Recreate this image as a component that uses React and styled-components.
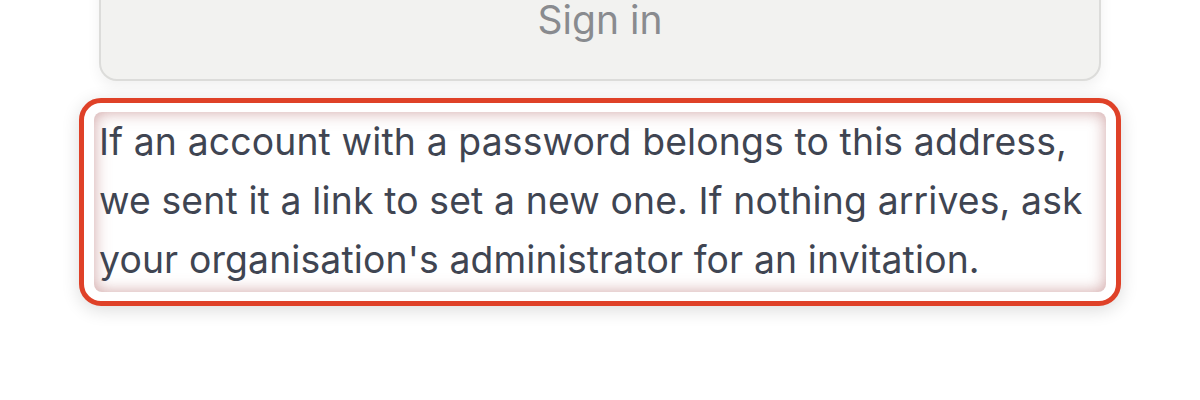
import styled, { createGlobalStyle } from "styled-components";

const GlobalStyle = createGlobalStyle`
  html, body {
    margin: 0;
    padding: 0;
    background: #ffffff;
  }
  body {
    font-family: Inter, "Noto Sans", sans-serif;
  }
`;

const Page = styled.div`
  width: 1200px;
  height: 400px;
  overflow: hidden;
  display: flex;
  flex-direction: column;
  align-items: center;
`;

const SignInButton = styled.button`
  width: 1002px;
  height: 122px;
  margin-top: -41px;
  padding-top: 0;
  background: #f2f2f0;
  border: 2px solid #dcdcda;
  border-radius: 18px;
  box-shadow: 0 6px 14px rgba(0, 0, 0, 0.06);
  color: #898b8f;
  font-family: Inter, "Noto Sans", sans-serif;
  font-size: 39px;
  cursor: pointer;
`;

const Highlight = styled.div`
  margin-top: 17px;
  width: 1042px;
  box-sizing: border-box;
  border: 5px solid #df4128;
  border-radius: 22px;
  padding: 9px 10px;
  background: #ffffff;
  box-shadow: 0 4px 18px rgba(0, 0, 0, 0.14);
`;

const Message = styled.p`
  margin: 0;
  padding: 0 4px 3px 5px;
  border-radius: 8px;
  box-shadow: inset 0 0 16px rgba(170, 90, 90, 0.55);
  color: #3f4552;
  font-family: Inter, "Noto Sans", sans-serif;
  font-size: 37.3px;
  letter-spacing: 0.15px;
  line-height: 59px;
`;

export default function App() {
  return (
    <>
      <GlobalStyle />
      <Page>
        <SignInButton>Sign in</SignInButton>
        <Highlight>
          <Message>
            If an account with a password belongs to this address,
            <br />
            we sent it a link to set a new one. If nothing arrives, ask
            <br />
            your organisation's administrator for an invitation.
          </Message>
        </Highlight>
      </Page>
    </>
  );
}
